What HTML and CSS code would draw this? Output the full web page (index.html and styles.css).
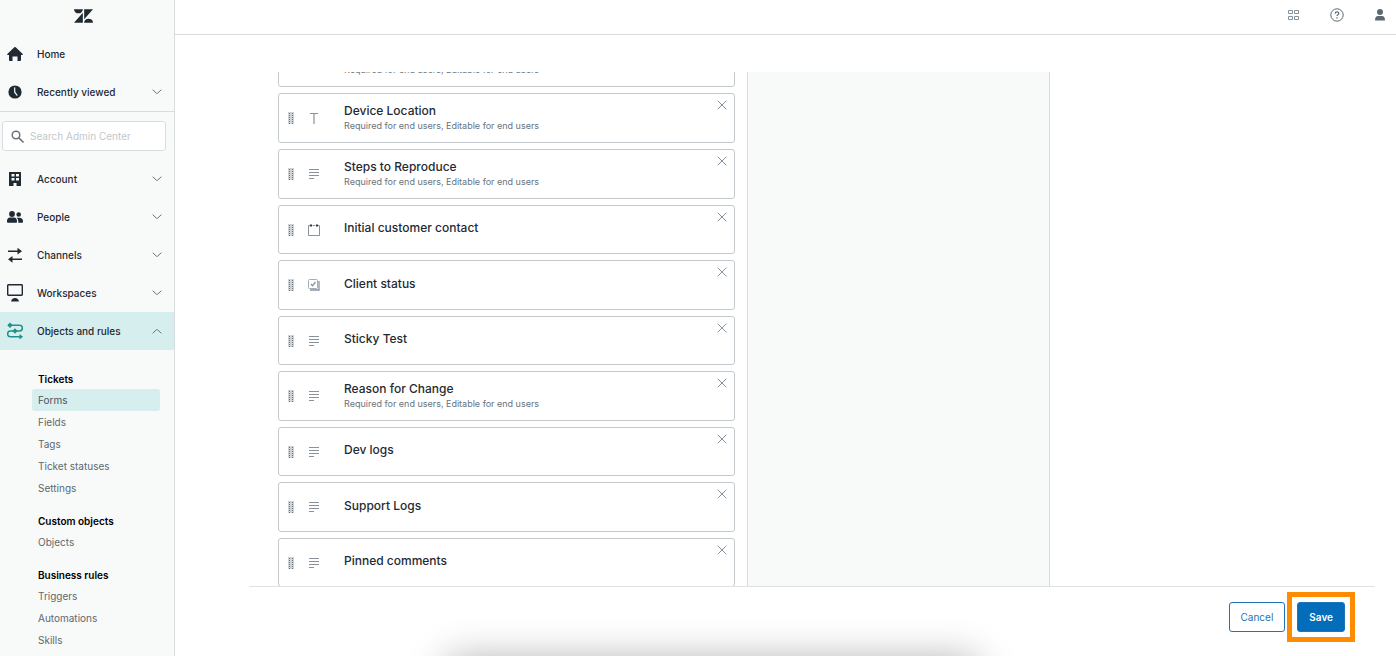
FILE: index.html
```html
<!DOCTYPE html>
<html lang="en">
<head>
    <meta charset="UTF-8">
    <meta name="viewport" content="width=device-width, initial-scale=1.0">
    <title>Forms - Admin Center</title>
    <link rel="stylesheet" href="styles.css">
</head>
<body>
    <!-- Shared icons -->
    <svg class="sprite" aria-hidden="true">
        <symbol id="chevron" viewBox="0 0 10 6">
            <path d="M1 1l3.4 3.2q.6.5 1.2 0L9 1" fill="none" stroke="currentColor" stroke-linecap="round"/>
        </symbol>
        <symbol id="close" viewBox="0 0 10 10">
            <path d="M1 1l8 8M9 1L1 9" fill="none" stroke="currentColor" stroke-linecap="round"/>
        </symbol>
        <symbol id="grip" viewBox="0 0 6 12">
            <path d="M0 0h6v12H0z" fill="#d0d4d7"/>
            <path d="M1.5 1v11M4.5 1v11" fill="none" stroke="#68737d" stroke-dasharray="1 1"/>
        </symbol>
        <symbol id="text" viewBox="0 0 12 12">
            <path d="M2 1.5h8M6 1.5V12" fill="none" stroke="currentColor" stroke-width="1.2"/>
        </symbol>
        <symbol id="lines" viewBox="0 0 12 12">
            <path d="M1 1.5h10M1 4.5h10M1 7.5h10M1 10.5h5" fill="none" stroke="currentColor"/>
        </symbol>
        <symbol id="calendar" viewBox="0 0 12 12">
            <path d="M2 1.5H.5v10h11v-10H10M4.5 1.5h3" fill="none" stroke="currentColor"/>
            <path d="M3 0v3M9 0v3M2 1.5h2M8 1.5h2" fill="none" stroke="#2f3941"/>
        </symbol>
        <symbol id="multi" viewBox="0 0 12 12">
            <rect x=".5" y=".5" width="9" height="9" rx="1" fill="none" stroke="#a5adb4"/>
            <path d="M3 5l1.5 1.7L7.5 3M11 2v9H2" fill="none" stroke="currentColor" stroke-width="1.3"/>
        </symbol>
    </svg>

    <div class="page">
        <!-- Sidebar -->
        <aside class="sidebar">
            <a href="#" class="logo" aria-label="Zendesk">
                <svg width="19" height="16" viewBox="0 0 20 16" fill="currentColor">
                    <path d="M0 1h9.3a4.65 4.2 0 0 1-9.3 0zM9.3 4.5V15H0zM10.7 1H20l-9.3 10.5zM10.7 15a4.65 4.2 0 0 1 9.3 0z"/>
                </svg>
            </a>
            <nav class="menu menu-top">
                <a href="#" class="menu-item">
                    <svg width="16" height="16" viewBox="0 0 16 16" fill="currentColor"><path d="M7.3 1.3q.7-.6 1.4 0L15.7 8q.5.9-.4 1H14v5q0 1-1 1h-2.5v-4.5h-5V15H3q-1 0-1-1V9H.7q-.9-.1-.4-1z"/></svg>
                    <span>Home</span>
                </a>
                <button type="button" class="menu-item">
                    <svg width="16" height="16" viewBox="0 0 16 16"><circle cx="8" cy="8" r="6.6" fill="currentColor"/><path d="M7.7 3.8v4.4l2.3 3" fill="none" stroke="#f8f9f9" stroke-width="1.2" stroke-linecap="round"/></svg>
                    <span>Recently viewed</span>
                    <svg class="chevron"><use href="#chevron"/></svg>
                </button>
            </nav>
            <label class="search">
                <svg width="13" height="13" viewBox="0 0 13 13" fill="none" stroke="currentColor"><circle cx="5" cy="5" r="3.8" stroke-width="1.5"/><path d="M8 8l4 4" stroke-width="1.7" stroke-linecap="round"/></svg>
                <input type="text" placeholder="Search Admin Center" aria-label="Search Admin Center">
            </label>
            <nav class="menu">
                <button type="button" class="menu-item">
                    <svg width="16" height="16" viewBox="0 0 16 16"><path d="M2 1h12v14H9.5v-3h-3v3H2z" fill="currentColor"/><path d="M4.5 3h3v2.5h-3zM9 3h3v2.5H9zM4.5 7h3v2.5h-3zM9 7h3v2.5H9z" fill="#f8f9f9"/></svg>
                    <span>Account</span>
                    <svg class="chevron"><use href="#chevron"/></svg>
                </button>
                <button type="button" class="menu-item">
                    <svg width="16" height="16" viewBox="0 0 16 16" fill="currentColor"><circle cx="5" cy="5" r="2.9"/><circle cx="11.7" cy="5.5" r="2.3"/><path d="M0 13v-1q.2-3 3-3.400h4q2.800.4 3 3.400v1q0 .8-.8.8H.8q-.8 0-.8-.8zM11.300 13.800V12q-.1-2-1.600-3.300h2.600Q15.900 9 16 12v1q0 .8-.8.8z"/></svg>
                    <span>People</span>
                    <svg class="chevron"><use href="#chevron"/></svg>
                </button>
                <button type="button" class="menu-item">
                    <svg width="16" height="16" viewBox="0 0 16 16"><path d="M1 4.200h11M4 12.300h11" fill="none" stroke="currentColor" stroke-width="1.5"/><path d="M10.500.8l4.500 3.400-4.500 3.400zM5.500 8.900L1 12.300l4.500 3.400z" fill="currentColor"/></svg>
                    <span>Channels</span>
                    <svg class="chevron"><use href="#chevron"/></svg>
                </button>
                <button type="button" class="menu-item">
                    <svg width="16" height="18" viewBox="0 0 16 18"><rect x=".7" y=".7" width="14.6" height="10.6" rx=".7" fill="none" stroke="currentColor" stroke-width="1.4"/><path d="M4 17.500q.7-3.500 4-3.500t4 3.500z" fill="currentColor"/></svg>
                    <span>Workspaces</span>
                    <svg class="chevron"><use href="#chevron"/></svg>
                </button>
                <button type="button" class="menu-item open" aria-expanded="true">
                    <svg width="16" height="18" viewBox="0 0 16 18"><path d="M3 3.200h9.500a2.900 2.900 0 0 1 0 5.800h-9a2.900 2.900 0 0 0 0 5.800H13" fill="none" stroke="currentColor" stroke-width="1.5"/><path d="M3 .5l2.700 2.700L3 5.900.3 3.200zM8 6.300L10.700 9 8 11.700 5.300 9zM12.500 12l3.500 2.800-3.500 2.800z" fill="currentColor"/></svg>
                    <span>Objects and rules</span>
                    <svg class="chevron"><use href="#chevron"/></svg>
                </button>
            </nav>
            <nav class="submenu">
                <section>
                    <h2>Tickets</h2>
                    <a href="#" class="active">Forms</a>
                    <a href="#">Fields</a>
                    <a href="#">Tags</a>
                    <a href="#">Ticket statuses</a>
                    <a href="#">Settings</a>
                </section>
                <section>
                    <h2>Custom objects</h2>
                    <a href="#">Objects</a>
                </section>
                <section>
                    <h2>Business rules</h2>
                    <a href="#">Triggers</a>
                    <a href="#">Automations</a>
                    <a href="#">Skills</a>
                </section>
            </nav>
        </aside>

        <!-- Main area -->
        <div class="main">
            <header class="topbar">
                <button type="button" aria-label="Products">
                    <svg width="12" height="12" viewBox="0 0 12 12" fill="none" stroke="#87929d"><path d="M.5 1.5h4v3h-4zM6.500 1.500h4v3h-4zM.5 7.500h4v3h-4zM6.500 7.500h4v3h-4z"/></svg>
                </button>
                <button type="button" aria-label="Help">
                    <svg width="14" height="14" viewBox="0 0 14 14" fill="none" stroke="currentColor"><circle cx="7" cy="7" r="6.2"/><path d="M5.200 5.600q.1-1.700 1.800-1.700t1.800 1.500q0 .9-1 1.400-.8.400-.8 1.200" stroke-width="1.2"/><path d="M7 9.300v1.300" stroke-width="1.3"/></svg>
                </button>
                <button type="button" aria-label="Profile">
                    <svg width="12" height="14" viewBox="0 0 12 14" fill="currentColor"><circle cx="6" cy="4" r="3"/><path d="M1 12.500q0-4.500 3-4.500h4q3 0 3 4.500z"/></svg>
                </button>
            </header>

            <main class="content">
                <div class="editor">
                    <div class="list-scroll">
                        <ul class="field-list">
                            <li class="field detailed scrolled">
                                <svg class="grip"><use href="#grip"/></svg>
                                <svg class="type"><use href="#lines"/></svg>
                                <div class="info"><p>Required for end users, Editable for end users</p></div>
                            </li>
                            <li class="field detailed">
                                <svg class="grip"><use href="#grip"/></svg>
                                <svg class="type"><use href="#text"/></svg>
                                <div class="info"><h3>Device Location</h3><p>Required for end users, Editable for end users</p></div>
                                <button type="button" aria-label="Remove Device Location"><svg><use href="#close"/></svg></button>
                            </li>
                            <li class="field detailed">
                                <svg class="grip"><use href="#grip"/></svg>
                                <svg class="type"><use href="#lines"/></svg>
                                <div class="info"><h3>Steps to Reproduce</h3><p>Required for end users, Editable for end users</p></div>
                                <button type="button" aria-label="Remove Steps to Reproduce"><svg><use href="#close"/></svg></button>
                            </li>
                            <li class="field">
                                <svg class="grip"><use href="#grip"/></svg>
                                <svg class="type"><use href="#calendar"/></svg>
                                <div class="info"><h3>Initial customer contact</h3></div>
                                <button type="button" aria-label="Remove Initial customer contact"><svg><use href="#close"/></svg></button>
                            </li>
                            <li class="field">
                                <svg class="grip"><use href="#grip"/></svg>
                                <svg class="type"><use href="#multi"/></svg>
                                <div class="info"><h3>Client status</h3></div>
                                <button type="button" aria-label="Remove Client status"><svg><use href="#close"/></svg></button>
                            </li>
                            <li class="field">
                                <svg class="grip"><use href="#grip"/></svg>
                                <svg class="type"><use href="#lines"/></svg>
                                <div class="info"><h3>Sticky Test</h3></div>
                                <button type="button" aria-label="Remove Sticky Test"><svg><use href="#close"/></svg></button>
                            </li>
                            <li class="field detailed">
                                <svg class="grip"><use href="#grip"/></svg>
                                <svg class="type"><use href="#lines"/></svg>
                                <div class="info"><h3>Reason for Change</h3><p>Required for end users, Editable for end users</p></div>
                                <button type="button" aria-label="Remove Reason for Change"><svg><use href="#close"/></svg></button>
                            </li>
                            <li class="field">
                                <svg class="grip"><use href="#grip"/></svg>
                                <svg class="type"><use href="#lines"/></svg>
                                <div class="info"><h3>Dev logs</h3></div>
                                <button type="button" aria-label="Remove Dev logs"><svg><use href="#close"/></svg></button>
                            </li>
                            <li class="field">
                                <svg class="grip"><use href="#grip"/></svg>
                                <svg class="type"><use href="#lines"/></svg>
                                <div class="info"><h3>Support Logs</h3></div>
                                <button type="button" aria-label="Remove Support Logs"><svg><use href="#close"/></svg></button>
                            </li>
                            <li class="field">
                                <svg class="grip"><use href="#grip"/></svg>
                                <svg class="type"><use href="#lines"/></svg>
                                <div class="info"><h3>Pinned comments</h3></div>
                                <button type="button" aria-label="Remove Pinned comments"><svg><use href="#close"/></svg></button>
                            </li>
                        </ul>
                    </div>
                    <div class="panel"></div>
                </div>
                <footer class="actions">
                    <button type="button" class="btn">Cancel</button>
                    <div class="highlight">
                        <button type="button" class="btn btn-primary">Save</button>
                    </div>
                </footer>
            </main>
        </div>
        <div class="bottom-shadow"></div>
    </div>
</body>
</html>
```
FILE: styles.css
```css
* {
    box-sizing: border-box;
}

body {
    margin: 0;
    font-family: Inter, "Liberation Sans", sans-serif;
    font-size: 10px;
    color: #2f3941;
    background-color: #fff;
}

h2, h3, p, ul {
    margin: 0;
    padding: 0;
}

a {
    color: inherit;
    text-decoration: none;
}

button {
    font-family: inherit;
    font-size: inherit;
    color: inherit;
    background: none;
    border: 0;
    padding: 0;
    cursor: pointer;
}

svg {
    display: block;
    flex-shrink: 0;
}

.sprite {
    position: absolute;
    width: 0;
    height: 0;
}

.page {
    position: relative;
    display: flex;
    height: 100vh;
    overflow: hidden;
}

/* Sidebar */
.sidebar {
    width: 175px;
    flex-shrink: 0;
    background-color: #f8f9f9;
    border-right: 1px solid #d8dcde;
    overflow: hidden;
}

.logo {
    display: flex;
    justify-content: center;
    height: 35px;
    padding: 8px 7px 0 0;
    color: #1f2a33;
}

.menu-top {
    border-bottom: 1px solid #d8dcde;
}

.menu-item {
    display: flex;
    align-items: center;
    gap: 14px;
    width: 100%;
    height: 38px;
    padding: 0 12px 0 7px;
    font-weight: 500;
    text-align: left;
    color: #1f2a33;
}

.menu-item span {
    flex: 1;
}

.chevron {
    width: 10px;
    height: 6px;
    color: #68737d;
}

.menu-item.open {
    background-color: #d6eeed;
}

.open svg {
    color: #228f8a;
}

.open .chevron {
    color: #68737d;
    transform: rotate(180deg);
}

.search {
    display: flex;
    align-items: center;
    gap: 2px;
    height: 30px;
    margin: 9px 8px 9px 2px;
    padding: 0 8px;
    background-color: #fff;
    border: 1px solid #d8dcde;
    border-radius: 3px;
    color: #68737d;
}

.search input {
    flex: 1;
    min-width: 0;
    border: 0;
    outline: 0;
    padding: 0 4px;
    font: inherit;
    background: none;
}

.search input::placeholder {
    color: #c2c8cc;
}

.submenu {
    display: flex;
    flex-direction: column;
    gap: 12px;
    padding: 19px 14px 0 32px;
}

.submenu h2 {
    padding-left: 6px;
    font-size: 10px;
    font-weight: 600;
    line-height: 20px;
    color: #000;
}

.submenu a {
    display: block;
    padding-left: 6px;
    line-height: 22px;
    color: #5c6970;
    border-radius: 3px;
}

.submenu a.active {
    color: #49545c;
    background-color: #d6eeed;
}

/* Main area */
.main {
    display: flex;
    flex-direction: column;
    flex: 1;
    min-width: 0;
}

.topbar {
    display: flex;
    align-items: center;
    justify-content: flex-end;
    gap: 30px;
    height: 35px;
    padding: 0 10px 4px 0;
    border-bottom: 1px solid #d8dcde;
    color: #5c6970;
}

.content {
    display: flex;
    flex-direction: column;
    flex: 1;
    min-height: 0;
    padding: 37px 21px 0 74px;
}

.editor {
    display: flex;
    gap: 12px;
    flex: 1;
    min-height: 0;
    padding-left: 29px;
    border-bottom: 1px solid #dfe2e4;
}

.list-scroll {
    flex: 0 1 457px;
    overflow: hidden;
}

/* The list is scrolled, so its first card is cut off */
.field-list {
    display: flex;
    flex-direction: column;
    gap: 6px;
    margin-top: -35px;
    list-style: none;
}

.field {
    display: flex;
    align-items: center;
    height: 50px;
    padding: 0 7px 0 9px;
    border: 1px solid #c2c8cc;
    border-radius: 3px;
}

.field:not(.detailed):nth-child(even) {
    height: 49px;
}

.grip {
    width: 6px;
    height: 12px;
    margin-right: 14px;
}

.type {
    width: 12px;
    height: 12px;
    color: #87929d;
}

.info {
    flex: 1;
    padding: 0 0 3px 24px;
}

.detailed .info {
    padding-bottom: 0;
}

.scrolled .info {
    padding-top: 16px;
}

.field h3 {
    font-size: 12px;
    font-weight: 500;
    line-height: 16px;
    color: #1f2a33;
}

.field p {
    font-size: 9px;
    line-height: 14px;
    color: #68737d;
}

.field button {
    align-self: flex-start;
    padding-top: 6px;
    color: #87929d;
}

.field button svg {
    width: 10px;
    height: 10px;
}

.panel {
    flex: 0 1 303px;
    background-color: #f8f9f9;
    border: solid #d8dcde;
    border-width: 0 1px;
}

.actions {
    display: flex;
    align-items: center;
    justify-content: flex-end;
    gap: 2px;
    padding: 5px 20px 14px 0;
}

.btn {
    height: 30px;
    padding: 0 11px;
    border: 1px solid #1f73b7;
    border-radius: 3px;
    color: #1f73b7;
    background-color: #fff;
}

.btn-primary {
    font-weight: 600;
    color: #fff;
    background-color: #036dbb;
}

.highlight {
    padding: 5px;
    border: 5px solid #ff8c00;
}

/* Soft shadow rising from the bottom edge */
.bottom-shadow {
    position: absolute;
    top: 100%;
    left: 32%;
    width: 38%;
    height: 80px;
    box-shadow: 0 4px 40px rgba(0, 0, 0, 0.33);
    pointer-events: none;
}
```
